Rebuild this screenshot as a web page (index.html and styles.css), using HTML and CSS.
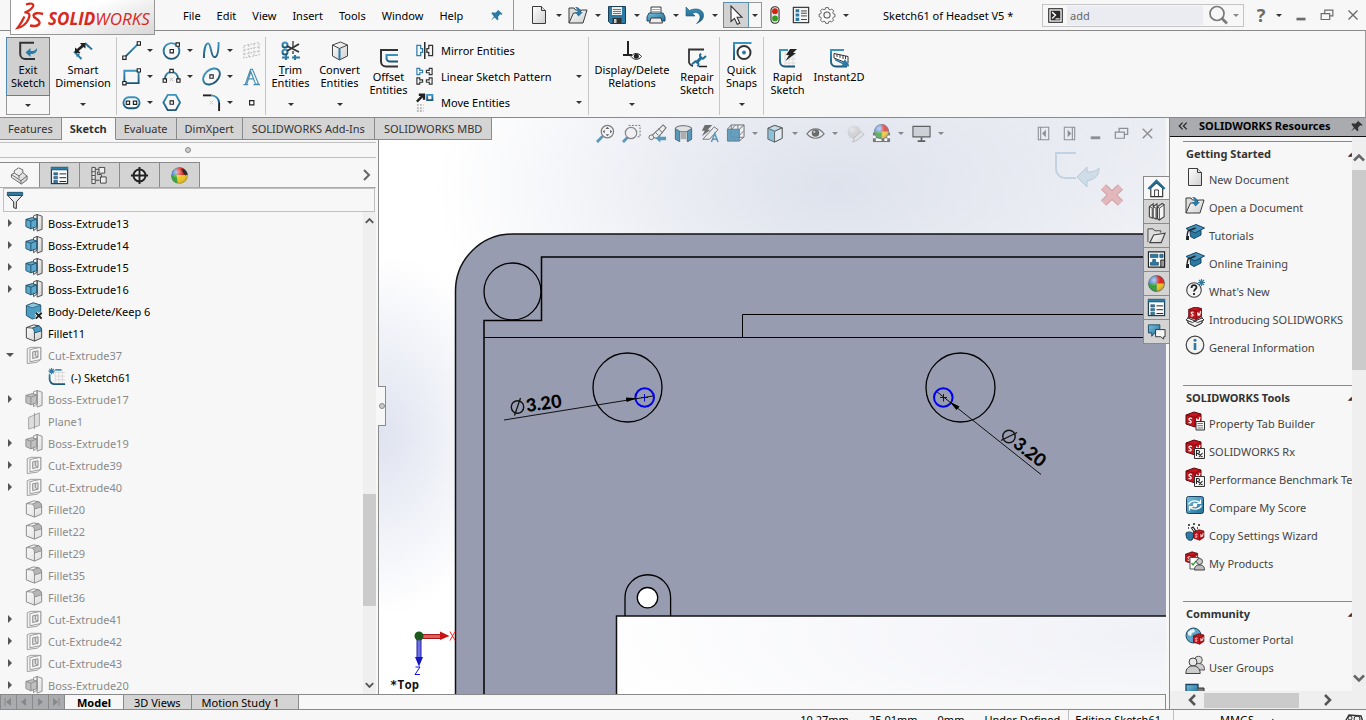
FILE: index.html
```html
<!DOCTYPE html>
<html lang="en">
<head>
<meta charset="utf-8">
<title>SOLIDWORKS - Sketch61 of Headset V5</title>
<link rel="stylesheet" href="styles.css">
</head>
<body>
<svg class="defs" aria-hidden="true">
  <defs>
    <linearGradient id="gBlue" x1="0" y1="0" x2="1" y2="1"><stop offset="0" stop-color="#7cc0de"/><stop offset="1" stop-color="#1f6c96"/></linearGradient>
    <linearGradient id="gPaper" x1="0" y1="0" x2="1" y2="1"><stop offset="0" stop-color="#fff"/><stop offset="1" stop-color="#cfcfcf"/></linearGradient>
    <linearGradient id="gStroke" x1="0" y1="0" x2="0" y2="1"><stop offset="0" stop-color="#3b95c0"/><stop offset="1" stop-color="#1c5677"/></linearGradient>
    <radialGradient id="gShine" cx=".35" cy=".3" r=".8"><stop offset="0" stop-color="#fff" stop-opacity=".65"/><stop offset=".5" stop-color="#fff" stop-opacity="0"/><stop offset="1" stop-color="#000" stop-opacity=".3"/></radialGradient>
    <symbol id="new" viewBox="0 0 20 20"><path d="M3.500 1.500h9l4 4v13h-13z" fill="url(#gPaper)" stroke="#3b3b3b"/><path d="M12.500 1.500v4h4" fill="#ddd" stroke="#3b3b3b"/></symbol>
    <symbol id="open" viewBox="0 0 20 20"><path d="M1 18V3h5l1.500 2H13v3" fill="#ddd" stroke="#3b3b3b"/><path d="M1 18 5.500 8h6l2-3h5.500l-4 13z" fill="url(#gPaper)" stroke="#3b3b3b"/><path d="M7 2c4 0 5.500 2 5.500 5H15l-4.500 4.500L7 7h2.500C9.500 5 9 3.500 7 2z" fill="#2b7ba5"/></symbol>
    <symbol id="save" viewBox="0 0 20 20"><path d="M1.500 1.500h17v17h-15l-2-2z" fill="#2b7ba5" stroke="#1d3f55"/><path d="M5 2h10v8H5z" fill="#eee"/><path d="M6 4.500h8M6 6.500h8M6 8.500h8" stroke="#777"/><path d="M5.500 13h9v5.500h-9z" fill="#333"/><path d="M7 14h2.500v4H7z" fill="#ccc"/></symbol>
    <symbol id="print" viewBox="0 0 20 20"><path d="M5 8V2h10v6" fill="#fff" stroke="#3b3b3b"/><path d="M3 8h14l2 4v4H1v-4z" fill="url(#gBlue)" stroke="#1c4c68"/><path d="M5 13h10l1.500 5h-13z" fill="#eee" stroke="#3b3b3b"/><path d="M6 4.500h8M6 6.500h8" stroke="#aaa"/></symbol>
    <symbol id="undo" viewBox="0 0 20 20"><path d="M1 2v9h9L7.500 8.200c4-2 8 .5 7.500 4.500-.2 2-1.500 4-3.500 5.800 5-2 7.500-5 7-9C18 4 10 2.500 4.500 5.500z" fill="url(#gStroke)" stroke="#1c5677" stroke-width=".6"/></symbol>
    <symbol id="cursor" viewBox="0 0 20 20"><path d="M5 1v15.500l3.500-3.200 2.800 6 2.500-1.100-2.700-5.900h4.900z" fill="#fff" stroke="#333" stroke-width="1.100"/></symbol>
    <symbol id="traffic" viewBox="0 0 20 20"><rect x="5.500" y=".8" width="9" height="18.400" rx="4" fill="#e8e8e8" stroke="#333" stroke-width="1.200"/><circle cx="10" cy="5.800" r="3.200" fill="#d8210c"/><circle cx="10" cy="13.800" r="3.200" fill="#329a1e"/></symbol>
    <symbol id="options" viewBox="0 0 20 20"><rect x="1.500" y="1.500" width="17" height="17" fill="#f4f4f4" stroke="#333" stroke-width="1.300"/><path d="M4 3.500h4v3.500H4zM4 8.300h4v3.500H4zM4 13.100h4v3.500H4z" fill="#2b7ba5"/><path d="M10 5.500h6.500M10 8h6.500M10 11h6.500M10 15h6.500" stroke="#333"/></symbol>
    <symbol id="props" viewBox="0 0 20 20"><rect x="1.500" y="1.500" width="17" height="17" fill="#fafafa" stroke="#1d3f55" stroke-width="1.300"/><path d="M1 1.500h18v3H1z" fill="url(#gStroke)"/><path d="M4 7h4v2.500H4zM4 11h4v2.500H4zM4 15h4v2.500H4z" fill="#2b7ba5" stroke="#1d3f55" stroke-width=".5"/><path d="M10 8.300h7M10 12.300h7M10 16.300h7" stroke="#222"/></symbol>
    <symbol id="gear" viewBox="0 0 20 20"><path d="M8.300 2h3.400l.5 2.100 1.700.7 1.900-1.100 2.400 2.400-1.100 1.900.6 1.600 2.100.5v3.200l-2.100.6-.7 1.600 1.100 1.900-2.400 2.400-1.900-1.100-1.700.7-.5 2H8.400l-.6-2-1.600-.7-1.900 1.100-2.400-2.400L3 15.400l-.7-1.600-2-.5V10l2-.5L3 7.900 1.900 6l2.400-2.400 1.900 1.100 1.600-.6z" fill="#fafafa" stroke="#555" stroke-width="1.100" transform="translate(1 0) scale(.9)"/><circle cx="10" cy="10" r="3.400" fill="#f7f7f7" stroke="#555" stroke-width="1.200"/></symbol>
    <symbol id="pin" viewBox="0 0 20 20"><path d="M11 2l7 6.500-1.500 1-2-.5-3 3.500.5 4-1.500 1-4-4-5 4.500 4-6L2 7.500 3.500 6l4 .8L11 4z" fill="currentColor"/></symbol>
    <symbol id="term" viewBox="0 0 20 20"><rect x="1" y="1" width="18" height="18" fill="#fff" stroke="#222" stroke-width="1.500"/><path d="M3.500 3.500h13v13h-13z" fill="#2b2b2b"/><path d="M5.500 5.500 10 9.500l-4.500 4.500" fill="none" stroke="#fff" stroke-width="1.800"/><path d="M10 14.500h5.500" stroke="#fff" stroke-width="1.500"/></symbol>
    <symbol id="lens" viewBox="0 0 20 20"><circle cx="9" cy="8.500" r="7" fill="none" stroke="#7a7a7a" stroke-width="1.700"/><path d="m14 13.500 5 5" stroke="#7a7a7a" stroke-width="2.600"/></symbol>
    <symbol id="min" viewBox="0 0 20 20"><path d="M5 13h10v3H5z" fill="currentColor"/></symbol>
    <symbol id="restore" viewBox="0 0 20 20"><path d="M7.500 8V4.500h9v6.500H13M3.500 8.500H13v6.500H3.500z" fill="none" stroke="currentColor" stroke-width="1.300"/></symbol>
    <symbol id="close" viewBox="0 0 20 20"><path d="m5 5 10 10M15 5 5 15" stroke="currentColor" stroke-width="1.500"/></symbol>
    <symbol id="exit" viewBox="0 0 20 20"><path d="M16 1.800H2.200V13a5 5 0 0 0 5 5H17" fill="none" stroke="#333" stroke-width="2"/><path d="M19 7c.5 4-2 6-6.500 6v3L7.500 11.500l5-4.500v3c3 .3 5-.5 6.500-3z" fill="#2b7ba5"/></symbol>
    <symbol id="dim" viewBox="0 0 20 20"><path d="M1 10.500 8.500 18M12 2l7 6.500" stroke="#2b7ba5" stroke-width="2"/><path d="m3.500 15.500 3-3M14.500 6l1.500-1.500" stroke="#2b7ba5" stroke-width="1.500"/><path d="M2 12V6.500l2 1.600L8.500 4 7 2h5.500v5.500l-2-1.600L5.700 10 7.500 12z" fill="#222"/></symbol>
    <symbol id="line" viewBox="0 0 20 20"><path d="m3 17 14-14" stroke="url(#gStroke)" stroke-width="2"/><path d="M.8 15.800h3.500v3.500H.8zM16 .8h3.500v3.500H16z" class="pt"/></symbol>
    <symbol id="circle" viewBox="0 0 20 20"><circle cx="10" cy="10.500" r="8.300" class="sk"/><path d="M8.500 9h3.500v3.500H8.500zM14.800 2h3.500v3.500h-3.500z" class="pt"/></symbol>
    <symbol id="spline" viewBox="0 0 20 20"><path d="M2 18C2 10 3.500 2.500 6.500 2.500S9.500 17 13 17 17.500 8 17.500 1" class="sk"/></symbol>
    <symbol id="plane" viewBox="0 0 20 20"><path d="M2 5 18 1.500v13L2 18zM7.300 4v13M12.600 3v13M2 9.500l16-3.500M2 14l16-3.500" fill="none" stroke="#bbb" stroke-width="1.100" stroke-dasharray="2 1.500"/></symbol>
    <symbol id="rect" viewBox="0 0 20 20"><path d="M2.500 4h15v13h-15z" class="sk"/><path d="M.8 15.300h3.500v3.500H.8zM16 1.800h3.500v3.500H16z" class="pt"/></symbol>
    <symbol id="arc" viewBox="0 0 20 20"><path d="M3 13a7 8 0 0 1 14 0" class="sk"/><path d="M8.300 2.500h3.500V6H8.300zM1.200 12.500h3.500V16H1.200zM15.500 12.500H19V16h-3.500z" class="pt"/><path d="m8 11 4 4m0-4-4 4" stroke="#bbb"/></symbol>
    <symbol id="ellipse" viewBox="0 0 20 20"><ellipse cx="10" cy="10" rx="10" ry="7" transform="rotate(-42 10 10)" class="sk"/><path d="M8.300 8.300h3.500v3.500H8.300z" class="pt"/></symbol>
    <symbol id="text" viewBox="0 0 20 20"><path d="M1.500 18.500h5M12 18.500h7M3.500 18 9 2.500h2L17.500 18h-3.200L9.300 5 5 18zM6 12.500h6.800" fill="none" stroke="#4a8fb3" stroke-width="1.200"/></symbol>
    <symbol id="slot" viewBox="0 0 20 20"><rect x="1.500" y="4.500" width="17" height="11.500" rx="5.700" class="sk"/><path d="M4.500 8.500H8V12H4.500zM12 8.500h3.500V12H12z" class="pt"/></symbol>
    <symbol id="poly" viewBox="0 0 20 20"><path d="M6 2h8.500l4.500 8-4.500 8H6l-4.500-8z" class="sk"/><path d="M8.500 8.300H12v3.500H8.500z" class="pt"/></symbol>
    <symbol id="fillet" viewBox="0 0 20 20"><path d="M1 2.500h9" stroke="#222" stroke-width="2"/><path d="M10 2.500a8 8 0 0 1 8 8" class="sk"/><path d="M18 10.500V19" stroke="#222" stroke-width="2"/><path d="m8 8 4 4m0-4-4 4" stroke="#ccc"/></symbol>
    <symbol id="point" viewBox="0 0 20 20"><path d="M8 8h4.500v4.500H8z" class="pt"/></symbol>
    <symbol id="trim" viewBox="0 0 20 20"><circle cx="4" cy="4" r="2.500" class="sk"/><circle cx="4" cy="11" r="2.500" class="sk"/><path d="m6 5 12 6M6 10l12-7" stroke="#333" stroke-width="1.800"/><path d="M12 0v6M12 10v3" stroke="#333" stroke-width="1.300"/><path d="M1 16.500h7M11 16.500h8M5 14v5M14 14v5" stroke="#2b7ba5" stroke-width="2.200"/></symbol>
    <symbol id="convert" viewBox="0 0 20 20"><path d="m2.500 4 8-3 7 3v11l-8 4-7-4z" fill="url(#gPaper)" stroke="#444"/><path d="m2.500 4 7 3.500 8-3.500" fill="none" stroke="#444"/><path d="M9.500 7.500V19" stroke="#2b7ba5" stroke-width="2"/></symbol>
    <symbol id="offset" viewBox="0 0 20 20"><path d="M19 2H2v11.500a5 5 0 0 0 5 5H19" fill="none" stroke="#333" stroke-width="2"/><path d="M19 7H7.500v3a3.500 3.500 0 0 0 3.500 3.500h8" class="sk"/></symbol>
    <symbol id="mirror" viewBox="0 0 20 20"><path d="M2 4.500h4V8h2v4H6v3.500H2z" fill="none" stroke="#2b7ba5" stroke-width="1.300"/><path d="M18.500 4.500h-4V8h-2v4h2v3.500h4z" fill="none" stroke="#333" stroke-width="1.300"/><path d="M10.300 1v18" stroke="#111" stroke-width="1.400"/></symbol>
    <symbol id="pattern" viewBox="0 0 20 20"><path d="M2 1.500h3v2h3V6H5v2H2z" fill="none" stroke="#2b7ba5" stroke-width="1.200"/><path d="M18 1.500h-3v2h-3V6h3v2h3zM2 11.500h3v2h3V16H5v2H2zM18 11.500h-3v2h-3V16h3v2h3z" fill="none" stroke="#333" stroke-width="1.200"/></symbol>
    <symbol id="move" viewBox="0 0 20 20"><path d="m2 9 7-7M4 1.800h5.500V7" fill="none" stroke="#222" stroke-width="2.500"/><path d="M12.800 2h5.500v5.500h-5.500z" class="sk"/><path d="M2 12.500h7M2 16h7M2 19h7" stroke="#bbb" stroke-width="2" stroke-dasharray="2 1.200"/></symbol>
    <symbol id="relations" viewBox="0 0 20 20"><path d="M6 0v13M1 14h9" stroke="#222" stroke-width="2"/><path d="M9 15.500c3-4 7.500-4 10.500 0-3 3.800-7.500 3.800-10.500 0z" fill="#fff" stroke="#222"/><circle cx="14.300" cy="15.200" r="2.500" fill="#222"/></symbol>
    <symbol id="repair" viewBox="0 0 20 20"><path d="M17 1.500H2v11a5 5 0 0 0 4 5.500" fill="none" stroke="#333" stroke-width="1.800"/><path d="m9 15 6-6" stroke="#1f6c96" stroke-width="3"/><path d="M14 5.500c-2 2-1 5 2 5.200l3-2.700M10.500 18.500c2-2 1-5-2-5.200l-3.500 3" fill="none" stroke="#1f6c96" stroke-width="2"/><path d="M12 18.500h8" stroke="#222" stroke-width="1.500"/></symbol>
    <symbol id="snaps" viewBox="0 0 20 20"><path d="M19.500 2H2v17" class="sk"/><circle cx="12" cy="11.500" r="6.500" fill="#fff" stroke="#333" stroke-width="2"/><circle cx="12" cy="11.500" r="2" fill="#2b7ba5"/></symbol>
    <symbol id="rapid" viewBox="0 0 20 20"><path d="M7 7h11M7 11h11M7 15h11M7 4v15M11 4v15M15 4v15" stroke="#ddd"/><path d="M10 2H2v11.500a5 5 0 0 0 5 5h10" class="sk"/><path d="M12 1h7l-4 4h3L7.500 13 11 7H8z" fill="#222"/></symbol>
    <symbol id="instant" viewBox="0 0 20 20"><path d="M15 2H2v11.500a5 5 0 0 0 5 5h11" class="sk"/><path d="m5 5.500 14 3v7L5 10z" fill="#fff" stroke="#333"/><path d="M8 6v3M11 6.800v3M14 7.500v3.500M16.500 8v3" stroke="#333"/><path d="m6 11.500 9 4.500M16 12.500l3.500 5-6 .5z" fill="#2b7ba5" stroke="#2b7ba5" stroke-width="1.500"/></symbol>
    <symbol id="part" viewBox="0 0 20 20"><path d="m1.500 9 3-1.500V5L9 2l4.500 2v3l4.500 3.500v4L12 19 1.500 12z" fill="url(#gPaper)" stroke="#666"/><path d="m4.500 7.500 5 3 4-3.500M1.500 9l10 6.500 6.500-5M11.500 15.500V19M9.500 10.500V13" fill="none" stroke="#666"/></symbol>
    <symbol id="config" viewBox="0 0 20 20"><path d="M2 1.500h3.500v17H2zM5.500 3.500H10M5.500 15H10M2 6h3M2 10h3M2 14h3" fill="#eee" stroke="#444"/><path d="M9.500 1.500h6v6h-6zM11 11.500h6v6.500h-6zM8 6v3h4v3" fill="#eee" stroke="#444"/></symbol>
    <symbol id="target" viewBox="0 0 20 20"><circle cx="10" cy="10" r="6.300" fill="#e8e8e8" stroke="#222" stroke-width="2"/><path d="M10 1v18M1 10h18" stroke="#222" stroke-width="2"/></symbol>
    <symbol id="ball" viewBox="0 0 20 20"><circle cx="10" cy="10" r="8.500" fill="#3a78d0"/><path d="M10 1.500a8.500 8.500 0 0 1 8.500 8.500H10z" fill="#d8241d"/><path d="M18.500 10a8.500 8.500 0 0 1-8.500 8.500V10z" fill="#f0c21b"/><path d="M10 18.500A8.500 8.500 0 0 1 1.500 10H10z" fill="#2f9e35"/><circle cx="10" cy="10" r="8.500" fill="url(#gShine)" stroke="#555" stroke-width=".5"/></symbol>
    <symbol id="ball2" viewBox="0 0 20 20"><circle cx="10" cy="10" r="8.700" fill="#3aa83a"/><path d="M2 7a8.700 8.700 0 0 1 14-3l2.700 6H4z" fill="#d8241d"/><path d="M1.300 10 7 7l1 11.500A8.700 8.700 0 0 1 1.300 10z" fill="#38a038"/><path d="M7 9.500h11.700A8.700 8.700 0 0 1 8 18.500z" fill="#eec422"/><path d="M2.500 5.500 7 1.800 7 8l-5.500 2z" fill="#3a78d0"/><path d="m11 3 5 7 2.500-1c0-3-3-6-7.500-6z" fill="#222"/><circle cx="10" cy="10" r="8.700" fill="url(#gShine)"/></symbol>
    <symbol id="funnel" viewBox="0 0 20 20"><path d="m2 5 6.500 7v6.500l3 1V12L18 5z" fill="url(#gPaper)" stroke="#333" stroke-width="1.100"/><path d="M1.500 1.500h17V5h-17z" fill="#2b7ba5" stroke="#1c4c68"/></symbol>
    <symbol id="boss" viewBox="0 0 20 20"><path d="m9.500 2 4-1.500v15l-4 3zM13.500.5l5.500 2V17l-5.500 2z" fill="url(#gPaper)" stroke="#444"/><path d="M1 6 8 4l5 1.500v8.500l-6.500 2.500L1 14z" fill="#5ea9cb" stroke="#1c4c68"/><path d="M1 6 6.500 8v8.500M6.500 8 13 5.500" fill="none" stroke="#1c4c68"/></symbol>
    <symbol id="bodydel" viewBox="0 0 20 20"><path d="M1.500 4 9 1l8.500 2.500v12L8 19l-6.500-4z" fill="#4c9dc2" stroke="#1c4c68"/><path d="M1.500 4 8 6.500l9.500-3L9 1z" fill="#8fc7df" stroke="#1c4c68" stroke-width=".7"/><path d="m12 12 6.500 6.500m0-6.500L12 18.500" stroke="#fff" stroke-width="4"/><path d="m12 12 6.500 6.500m0-6.500L12 18.500" stroke="#222" stroke-width="2.200"/></symbol>
    <symbol id="fil" viewBox="0 0 20 20"><path d="m1.500 4 8-3 6 1c2 1 3 3 3 5v8.500L10.500 19l-9-3.500z" fill="url(#gPaper)" stroke="#444" stroke-width="1.100"/><path d="M8 4.500 15 2c2 1 3.500 3 3.500 5.500L10.500 10c0-3-.5-4-2.500-5.500z" fill="#4c9dc2" stroke="#1c4c68"/><path d="m1.500 4 6.500.5M10.500 10v9" stroke="#444"/></symbol>
    <symbol id="cut" viewBox="0 0 20 20"><path d="m2.500 3 4-1.500h11V15l-4 3-11 1.500z" fill="#f2f2f2" stroke="#555"/><path d="m5.500 4 12-2.500V15l-12 2.500z" fill="#fafafa" stroke="#555"/><path d="m8.500 6.500 6-1.200v7.200l-6 1.500z" fill="#ccc" stroke="#444"/><path d="M11.500 6v4.500l3 2" fill="none" stroke="#444"/></symbol>
    <symbol id="refplane" viewBox="0 0 20 20"><path d="m4 6 12-5v14L4 19z" fill="#ccc" stroke="#666"/><path d="M10.500 1v18" stroke="#555"/></symbol>
    <symbol id="sketch" viewBox="0 0 20 20"><path d="M8 5h11M8 9h11M8 13h11M8 2v14M12 2v14M16 2v14" stroke="#d8d8d8"/><path d="M8 2h7M1.800 7v5.500a5.500 5.500 0 0 0 5.500 5.500H19" class="sk"/><path d="M4 0v7M.5 3.500h7M1.500 1l5 5M6.500 1l-5 5" stroke="#2b7ba5" stroke-width="1.200"/></symbol>
    <symbol id="zoomfit" viewBox="0 0 20 20"><path d="m1 19 6-6" stroke="#2b7ba5" stroke-width="3"/><circle cx="12" cy="8" r="6.500" fill="#f5f6f8" stroke="#555" stroke-width="1.300"/><path d="m12 3 2 2.200h-4zM12 13l2-2.200h-4zM7 8l2.200-2v4zM17 8l-2.200-2v4z" fill="#333"/></symbol>
    <symbol id="zoomarea" viewBox="0 0 20 20"><path d="M7 1.500h12v12h-4" fill="none" stroke="#444" stroke-dasharray="2 1.500"/><path d="m1 19 5-5" stroke="#2b7ba5" stroke-width="3"/><circle cx="9.500" cy="9.500" r="6" fill="#eef0f4" stroke="#666" stroke-width="1.300"/></symbol>
    <symbol id="prev" viewBox="0 0 20 20"><path d="M2 14 16 1l3 3-9 11z" fill="#eee" stroke="#444" stroke-width="1.100"/><path d="m11 5 4 4M8 9l3 3" stroke="#444"/><path d="M19 17h-6v2.500L8 15l5-4v2.500h6z" fill="#2b7ba5"/><circle cx="3.500" cy="14" r="2.500" fill="#eee" stroke="#444"/></symbol>
    <symbol id="section" viewBox="0 0 20 20"><path d="M1.500 4c4-3 12-3 17 0v12l-4 2.500V8h-9v10l-4-2z" fill="#ddd" stroke="#333"/><path d="M1.500 5 6 7.500v11l-4.500-2.500zM14 7.500 18.500 5v11L14 18.500z" fill="#2b7ba5" stroke="#1c4c68"/><path d="M7 8h6v8H7z" fill="#999"/></symbol>
    <symbol id="dynamic" viewBox="0 0 20 20"><path d="M5 1h8L8 6h3l-9 7 3-6H2z" fill="#444"/><path d="M3 16 15 3l4 3-9 10z" fill="#eee" stroke="#444"/><path d="m12 19 3.500-9 3.500 9M13 16h5" fill="none" stroke="#2b7ba5" stroke-width="1.500"/></symbol>
    <symbol id="view" viewBox="0 0 20 20"><path d="m1.500 5.500 4-4.500H19v12.500L14 18M14 5.500 19 1" fill="#eef0f4" stroke="#444"/><path d="M5.500 1v13H19M10 1 6 5.500M12.500 1v4.500M19 7l-5 5" fill="none" stroke="#555"/><path d="M1.500 5.500H14V18H1.500z" fill="#2b7ba5" opacity=".9" stroke="#1c4c68"/></symbol>
    <symbol id="display" viewBox="0 0 20 20"><path d="M2 4.500 9 1.500l8 2.500v11l-8 4-7-3z" fill="#6fb4d3" stroke="#333"/><path d="M9 7.500 17 4v11l-8 4z" fill="#e4edf2" stroke="#333"/><path d="m2 4.500 7 3L17 4 9 1.500z" fill="#b7d9e8" stroke="#333"/></symbol>
    <symbol id="eye" viewBox="0 0 20 20"><path d="M1 10.500c5-7 13-7 18 0-5 6-13 6-18 0z" fill="#eee" stroke="#555" stroke-width="1.300"/><circle cx="10" cy="9.500" r="4" fill="#444"/><circle cx="8.700" cy="8.200" r="1.200" fill="#ccc"/></symbol>
    <symbol id="editapp" viewBox="0 0 20 20"><circle cx="8.500" cy="8.500" r="7" fill="#bbb"/><circle cx="8.500" cy="8.500" r="7" fill="url(#gShine)"/><path d="m7 19 2-5 7-6 3 3-7 6z" fill="#ddd" stroke="#888"/></symbol>
    <symbol id="scene" viewBox="0 0 20 20"><path d="M1 9h18v10H1z" fill="#555"/><path d="M1 12h3v3H1zM7 15h3v3H7zM13 15h3v3h-3zM16 12h3v3h-3zM4 15h3v3H4z" fill="#fff"/><use href="#ball" x="1" y="-1" width="18" height="18"/></symbol>
    <symbol id="monitor" viewBox="0 0 20 20"><path d="M1 2.500h18v11H1z" fill="#c6c9ce" stroke="#333" stroke-width="1.200"/><path d="M10 14v3.500M6 18h8" stroke="#333" stroke-width="1.800"/></symbol>
    <symbol id="dockl" viewBox="0 0 20 20"><path d="M4.500 3.500h11v13h-11zM7 3.500v13" fill="none" stroke="currentColor" stroke-width="1.100"/><path d="M12.500 6v8l-4-4z" fill="currentColor"/></symbol>
    <symbol id="dockr" viewBox="0 0 20 20"><path d="M4.500 3.500h11v13h-11zM13 3.500v13" fill="none" stroke="currentColor" stroke-width="1.100"/><path d="M8 6v8l4-4z" fill="currentColor"/></symbol>
    <symbol id="home" viewBox="0 0 20 20"><path d="M4 9.500V18.500h12.500V9.500L10 4z" fill="#fff" stroke="#333" stroke-width="1.200"/><path d="M8 18.500v-7h4v7" fill="none" stroke="#333"/><path d="m1.500 10.500 8.500-8.500 8.500 8.500" fill="none" stroke="#1f6c96" stroke-width="2.500"/></symbol>
    <symbol id="library" viewBox="0 0 20 20"><path d="M2.500 5 6.500 2v14l-1 1-3-1.500zM6.500 5l4-3v15l-1 1-3-1.500zM11 5l5-3.500 2 1.500v12.500L13 19l-2-1.500z" fill="#f5f5f5" stroke="#444" stroke-width="1.200"/><path d="m3 5 2.500 1.500V17M6.500 5 9.500 6.500V18M11 5l2 1.500V19M13 6.500 18 3" fill="none" stroke="#444"/></symbol>
    <symbol id="folder" viewBox="0 0 20 20"><path d="M1 17V3h5.500l1.500 2h6.500v2" fill="#ddd" stroke="#444"/><path d="m3 17.500 4-8 12-2-4 10z" fill="url(#gPaper)" stroke="#444" stroke-width="1.200"/></symbol>
    <symbol id="palette" viewBox="0 0 20 20"><path d="M1.500 2h17v16h-17z" fill="#fff" stroke="#222" stroke-width="1.200"/><path d="M3.500 4.500h8V8h-8zM13.500 4.500H17V8h-3.500zM6 10h3v3h3v3H3.500v-3H6z" fill="#2b7ba5" stroke="#1c4c68" stroke-width=".7"/><path d="M14.500 10.500h4V18h-4z" fill="#999" stroke="#222"/></symbol>
    <symbol id="forum" viewBox="0 0 20 20"><path d="M1.500 3h12v8.500H8L5 15v-3.500H1.500z" fill="url(#gBlue)" stroke="#1c4c68"/><path d="M9 8h10v7.500h-1.500V18l-3-2.500H9z" fill="#f5f5f5" stroke="#333"/></symbol>
    <symbol id="cap" viewBox="0 0 20 20"><path d="m5 8 .5 5.500L9 15.500l7-3.500V7.500z" fill="#2b7ba5" stroke="#174561"/><path d="m1 5.500 10-4 8.500 3.500L10 10z" fill="#4593ba" stroke="#174561"/><path d="M10.500 5 3 8c-1 3-1 5-1 8" fill="none" stroke="#222" stroke-width="1.400"/><path d="M1.500 13h2.500v4H1z" fill="#222"/></symbol>
    <symbol id="whatsnew" viewBox="0 0 20 20"><circle cx="9" cy="11" r="7.300" fill="#f3f3f3" stroke="#444" stroke-width="1.100"/><path d="M6.500 9c0-4 5-3.500 5-.7 0 2-2.500 2-2.500 4.200M9 14v2" fill="none" stroke="#222" stroke-width="1.800"/><path d="M16.500 0v7M13 3.500h7M14 1l5 5M19 1l-5 5" stroke="#2b7ba5" stroke-width="1.200"/></symbol>
    <symbol id="swbox" viewBox="0 0 20 20"><path d="m2 4 8-3 7 2v9l-6 4-9-3z" fill="#c5161d" stroke="#560a0d"/><path d="m2 4 9 2.500L17 3M11 6.500V16" fill="none" stroke="#7c0d12"/><path d="M8 7.500c-3-1-4 1-2 2s1.500 3-1.500 2M12.500 7.500l.5 4 1-2.500 1 1.500 1-4.500" fill="none" stroke="#fff" stroke-width="1.200"/></symbol>
    <symbol id="intro" viewBox="0 0 20 20"><path d="m3 10 7-2 7 2v6l-7 3.500L3 16z" fill="#ddd" stroke="#333"/><use href="#swbox" x="2" y="-1" width="17" height="17"/><path d="m3 11.500 7 3 7-3V16l-7 3.500L3 16z" fill="#eee" stroke="#333"/><path d="m3 11-2 2 6.500 2.500L10 14zM17 11l2 2-6.500 2.500L10 14z" fill="#fafafa" stroke="#333"/></symbol>
    <symbol id="info" viewBox="0 0 20 20"><circle cx="10" cy="10" r="8.800" fill="#f4f4f4" stroke="#444" stroke-width="1.200"/><circle cx="10" cy="5.200" r="1.500" fill="#2b7ba5"/><path d="M10 8v7" stroke="#2b7ba5" stroke-width="2.600"/></symbol>
    <symbol id="builder" viewBox="0 0 20 20"><use href="#swbox" x="-1" y="0" width="20" height="20"/><path d="M11 10.500h8.500v8.500H11z" fill="#f5f5f5" stroke="#333"/><path d="M12.500 12.500h5.500M12.500 14.700h5.500M12.500 17h5.500" stroke="#777"/></symbol>
    <symbol id="rx" viewBox="0 0 20 20"><use href="#swbox" x="-1" y="0" width="20" height="20"/><path d="M9.500 9.500h10v10h-10z" fill="#f5f5f5" stroke="#333"/><path d="M11.500 17v-5.500H13c2 0 2 3 0 3h-1.500m1.500 0 4.500 3.500m0-4L14 18" fill="none" stroke="#222" stroke-width="1.100"/></symbol>
    <symbol id="score" viewBox="0 0 20 20"><rect x="1.500" y="1.500" width="17" height="17" rx="2" fill="url(#gBlue)" stroke="#174561"/><path d="M3.500 9.500c2-4 8-5 12-1.500M16.500 10.500c-2 4-8 5-12 1.500M15.500 4.500v3.800h-3.500M4.500 15.500v-3.800H8" fill="none" stroke="#fff" stroke-width="1.300"/><circle cx="10" cy="10" r="2.200" fill="#fff"/></symbol>
    <symbol id="wizard" viewBox="0 0 20 20"><path d="M1 10c3-2 7-1 8 2l-2 5c-4 1-6-1-6-7z" fill="#2b7ba5" stroke="#174561"/><path d="M3 2h2M8 1h2M13 2h2M3 5h1M12 5h1" stroke="#222" stroke-width="1.500"/><path d="m7 4 6 9" stroke="#222" stroke-width="3"/><path d="m7.500 5 5 7.500" stroke="#fff"/><use href="#swbox" x="7" y="6" width="14" height="14"/></symbol>
    <symbol id="products" viewBox="0 0 20 20"><use href="#swbox" x="-1" y="0" width="16" height="16"/><path d="M5 6.500h9V18H5z" fill="#fff" stroke="#555"/><path d="m6.500 12 1.500 2 3-4" fill="none" stroke="#2f9e35" stroke-width="1.300"/><circle cx="14.500" cy="10.500" r="3" fill="#ccc" stroke="#444"/><path d="M9.500 19c0-4 2-5 5-5s5 1 5 5z" fill="#bbb" stroke="#444"/></symbol>
    <symbol id="portal" viewBox="0 0 20 20"><circle cx="8.500" cy="8.500" r="7.500" fill="#5ea9cb" stroke="#174561"/><path d="M3 5c2-2 4-3 6-3l1 3-3 1-1 3-3-1zM9 9l3-1 2 1-3 5z" fill="#e8f2f7"/><use href="#swbox" x="7" y="6" width="14" height="14"/></symbol>
    <symbol id="users" viewBox="0 0 20 20"><circle cx="13.500" cy="5" r="3.800" fill="#ddd" stroke="#555"/><path d="M8 15c0-5 2-6.500 5.500-6.500S19.500 10 19.500 15z" fill="#ccc" stroke="#555"/><circle cx="8" cy="7" r="4" fill="#e8e8e8" stroke="#444"/><path d="M.8 18.500C1 13 4 11 8 11s7 2 7.200 7.500z" fill="#ccc" stroke="#444"/></symbol>
    <symbol id="monitor2" viewBox="0 0 20 20"><path d="M1 1.500h12v9H1z" fill="url(#gBlue)" stroke="#174561" stroke-width="1.300"/><path d="M13 5h6v10h-9" fill="#777" stroke="#333"/></symbol>
  </defs>
</svg>

<header class="titlebar">
  <div class="logo">
    <svg class="logo-mark" viewBox="0 0 28 30" aria-hidden="true"><path d="M10 2.500C15 .5 18.500 2 17 4.500S12 9.500 8.500 10.500c5 0 6 2 4 6.500S6 25.500 1.500 26c3-3.500 5-8 7-11.500" fill="none" stroke="#d9281c" stroke-width="2.200"/><path d="M27 12c-5-1.500-9-1-9.500 1.500 0 3 6.500 4 6 7.500-.5 3-5 3.500-9.500 2.500" fill="none" stroke="#d9281c" stroke-width="2.400"/></svg>
    <span><b>SOLID</b>WORKS</span>
  </div>
  <nav class="menu">
    <a href="#">File</a><a href="#">Edit</a><a href="#">View</a><a href="#">Insert</a><a href="#">Tools</a><a href="#">Window</a><a href="#">Help</a>
    <button class="menu-pin" aria-label="Pin menu"><svg><use href="#pin"/></svg></button>
  </nav>
  <div class="quick">
    <button class="q" aria-label="New"><svg><use href="#new"/></svg></button><button class="dd" aria-label="New options"></button>
    <button class="q" aria-label="Open"><svg><use href="#open"/></svg></button><button class="dd" aria-label="Open options"></button>
    <button class="q" aria-label="Save"><svg><use href="#save"/></svg></button><button class="dd" aria-label="Save options"></button>
    <button class="q" aria-label="Print"><svg><use href="#print"/></svg></button><button class="dd" aria-label="Print options"></button>
    <button class="q" aria-label="Undo"><svg><use href="#undo"/></svg></button><button class="dd" aria-label="Undo options"></button>
    <button class="q picked" aria-label="Select"><svg><use href="#cursor"/></svg></button><button class="dd boxed" aria-label="Select options"></button>
    <button class="q wide" aria-label="Rebuild"><svg><use href="#traffic"/></svg></button>
    <button class="q wide" aria-label="File properties"><svg><use href="#options"/></svg></button>
    <button class="q wide" aria-label="Options"><svg><use href="#gear"/></svg></button><button class="dd slim" aria-label="Options menu"></button>
  </div>
  <div class="doc-title">Sketch61 of Headset V5 *</div>
  <div class="search">
    <svg class="term"><use href="#term"/></svg>
    <input type="text" value="add" aria-label="Search commands">
    <button class="q" aria-label="Search"><svg><use href="#lens"/></svg></button><button class="dd slim grey" aria-label="Search options"></button>
  </div>
  <div class="window-btns">
    <button class="help" aria-label="Help">?</button><button class="dd slim" aria-label="Help options"></button>
    <button class="w" aria-label="Minimize"><svg><use href="#min"/></svg></button>
    <button class="w" aria-label="Restore"><svg><use href="#restore"/></svg></button>
    <button class="w" aria-label="Close"><svg><use href="#close"/></svg></button>
  </div>
</header>

<section class="ribbon">
  <div class="exit-group">
    <button class="tool exit"><svg><use href="#exit"/></svg><span>Exit<br>Sketch</span></button>
    <button class="dd exit-dd" aria-label="Exit options"></button>
  </div>
  <div class="tool-col dimension"><button class="tool"><svg><use href="#dim"/></svg><span>Smart<br>Dimension</span></button><button class="dd" aria-label="Dimension options"></button></div>
  <div class="sketch-grid">
    <button aria-label="Line"><svg><use href="#line"/></svg></button><button class="dd" aria-label="Line options"></button>
    <button aria-label="Circle"><svg><use href="#circle"/></svg></button><button class="dd" aria-label="Circle options"></button>
    <button aria-label="Spline"><svg><use href="#spline"/></svg></button><button class="dd" aria-label="Spline options"></button>
    <button aria-label="Plane"><svg><use href="#plane"/></svg></button>
    <button aria-label="Rectangle"><svg><use href="#rect"/></svg></button><button class="dd" aria-label="Rectangle options"></button>
    <button aria-label="Arc"><svg><use href="#arc"/></svg></button><button class="dd" aria-label="Arc options"></button>
    <button aria-label="Ellipse"><svg><use href="#ellipse"/></svg></button><button class="dd" aria-label="Ellipse options"></button>
    <button aria-label="Text"><svg><use href="#text"/></svg></button>
    <button aria-label="Slot"><svg><use href="#slot"/></svg></button><button class="dd" aria-label="Slot options"></button>
    <button aria-label="Polygon"><svg><use href="#poly"/></svg></button><span></span>
    <button aria-label="Fillet"><svg><use href="#fillet"/></svg></button><button class="dd" aria-label="Fillet options"></button>
    <button aria-label="Point"><svg><use href="#point"/></svg></button>
  </div>
  <div class="tool-col entities"><button class="tool"><svg><use href="#trim"/></svg><span><u>T</u>rim<br>Entities</span></button><button class="dd" aria-label="Trim options"></button></div>
  <div class="tool-col entities"><button class="tool"><svg><use href="#convert"/></svg><span>Convert<br>Entities</span></button><button class="dd" aria-label="Convert options"></button></div>
  <div class="tool-col low entities"><button class="tool"><svg><use href="#offset"/></svg><span>Offset<br>Entities</span></button></div>
  <div class="rows">
    <div><button><svg><use href="#mirror"/></svg>Mirror Entities</button></div>
    <div><button><svg><use href="#pattern"/></svg>Linear Sketch Pattern</button><button class="dd" aria-label="Pattern options"></button></div>
    <div><button><svg><use href="#move"/></svg>Move Entities</button><button class="dd" aria-label="Move options"></button></div>
  </div>
  <div class="tool-col relations"><button class="tool"><svg><use href="#relations"/></svg><span>Display/Delete<br>Relations</span></button><button class="dd" aria-label="Relations options"></button></div>
  <div class="tool-col low repair"><button class="tool"><svg><use href="#repair"/></svg><span>Repair<br>Sketch</span></button></div>
  <div class="tool-col snaps"><button class="tool"><svg><use href="#snaps"/></svg><span>Quick<br>Snaps</span></button><button class="dd" aria-label="Snap options"></button></div>
  <div class="tool-col low rapid"><button class="tool"><svg><use href="#rapid"/></svg><span>Rapid<br>Sketch</span></button></div>
  <div class="tool-col low instant"><button class="tool"><svg><use href="#instant"/></svg><span>Instant2D</span></button></div>
</section>

<main class="work">
  <aside class="left">
    <nav class="cmd-tabs">
      <button>Features</button><button class="on">Sketch</button><button>Evaluate</button><button>DimXpert</button><button>SOLIDWORKS Add-Ins</button><button>SOLIDWORKS MBD</button>
    </nav>
    <div class="grip"><i class="dot"></i></div>
    <div class="fm-tabs">
      <button class="on" aria-label="Feature tree"><svg><use href="#part"/></svg></button>
      <button aria-label="Property manager"><svg><use href="#props"/></svg></button>
      <button aria-label="Configurations"><svg><use href="#config"/></svg></button>
      <button aria-label="DimXpert manager"><svg><use href="#target"/></svg></button>
      <button aria-label="Display manager"><svg><use href="#ball2"/></svg></button>
      <button class="more" aria-label="More"><svg viewBox="0 0 10 12"><path d="m2 1 5 5-5 5" fill="none" stroke="#666" stroke-width="2"/></svg></button>
    </div>
    <label class="filter"><svg><use href="#funnel"/></svg><input type="text" aria-label="Filter tree"></label>
    <div class="tree-wrap">
      <ul class="tree">
        <li><button class="tw" aria-label="Expand"></button><svg><use href="#boss"/></svg>Boss-Extrude13</li>
        <li><button class="tw" aria-label="Expand"></button><svg><use href="#boss"/></svg>Boss-Extrude14</li>
        <li><button class="tw" aria-label="Expand"></button><svg><use href="#boss"/></svg>Boss-Extrude15</li>
        <li><button class="tw" aria-label="Expand"></button><svg><use href="#boss"/></svg>Boss-Extrude16</li>
        <li><svg><use href="#bodydel"/></svg>Body-Delete/Keep 6</li>
        <li><svg><use href="#fil"/></svg>Fillet11</li>
        <li class="off"><button class="tw open" aria-label="Collapse"></button><svg><use href="#cut"/></svg>Cut-Extrude37</li>
        <li class="child"><svg><use href="#sketch"/></svg>(-) Sketch61</li>
        <li class="off"><button class="tw" aria-label="Expand"></button><svg><use href="#boss"/></svg>Boss-Extrude17</li>
        <li class="off"><svg><use href="#refplane"/></svg>Plane1</li>
        <li class="off"><button class="tw" aria-label="Expand"></button><svg><use href="#boss"/></svg>Boss-Extrude19</li>
        <li class="off"><button class="tw" aria-label="Expand"></button><svg><use href="#cut"/></svg>Cut-Extrude39</li>
        <li class="off"><button class="tw" aria-label="Expand"></button><svg><use href="#cut"/></svg>Cut-Extrude40</li>
        <li class="off"><svg><use href="#fil"/></svg>Fillet20</li>
        <li class="off"><svg><use href="#fil"/></svg>Fillet22</li>
        <li class="off"><svg><use href="#fil"/></svg>Fillet29</li>
        <li class="off"><svg><use href="#fil"/></svg>Fillet35</li>
        <li class="off"><svg><use href="#fil"/></svg>Fillet36</li>
        <li class="off"><button class="tw" aria-label="Expand"></button><svg><use href="#cut"/></svg>Cut-Extrude41</li>
        <li class="off"><button class="tw" aria-label="Expand"></button><svg><use href="#cut"/></svg>Cut-Extrude42</li>
        <li class="off"><button class="tw" aria-label="Expand"></button><svg><use href="#cut"/></svg>Cut-Extrude43</li>
        <li class="off"><button class="tw" aria-label="Expand"></button><svg><use href="#boss"/></svg>Boss-Extrude20</li>
      </ul>
      <div class="vscroll">
        <svg class="chev" viewBox="0 0 14 14"><path d="m3 9 4-4 4 4" fill="none" stroke="#555" stroke-width="2"/></svg>
        <div class="track"><i></i></div>
        <svg class="chev" viewBox="0 0 14 14"><path d="m3 5 4 4 4-4" fill="none" stroke="#555" stroke-width="2"/></svg>
      </div>
    </div>
    <div class="splitter"><i class="dot"></i></div>
  </aside>

  <section class="viewport">
    <svg class="model" role="img" aria-label="Top view of the sketch">
      <g transform="translate(-379 -118)">
        <path d="M455.500 3000V291a57 57 0 0 1 57-57H4000V616H616.500V3000z" fill="#989cb0" stroke="#111" stroke-width="1.500"/>
        <g fill="none" stroke="#000" stroke-width="1.300">
          <path d="M484 3000V320.500H541.500V257H4000" stroke-width="1.500"/>
          <path d="M484 337.500H4000M742.500 337.500V314.500H4000" stroke-width="1"/>
          <circle cx="512.500" cy="291.500" r="28.500"/>
          <circle cx="627.500" cy="387.500" r="34.500"/>
          <circle cx="960.500" cy="387.500" r="34.500"/>
          <path d="M625 616V597.500a22.800 22.800 0 0 1 45.600 0V616"/>
          <circle cx="647.500" cy="597.700" r="10.200" fill="#fff"/>
        </g>
        <g fill="none" stroke="#0000f0" stroke-width="2">
          <circle cx="644.700" cy="397.500" r="9.300"/><circle cx="943.300" cy="397.500" r="9.300"/>
          <path d="M644.500 394v7.500M641 397.500h7M943.500 394v7.500M940 397.500h7" stroke-width="1"/>
        </g>
        <g stroke="#111" fill="none">
          <path d="m504 420 149-24M936 391l105 83.500"/>
          <path d="m626 399 .7 3 10-3.800-10.500-.7zM949.500 401.500l7 8.500 3-3.500z" fill="#000" stroke="none"/>
          <circle cx="517.500" cy="407" r="6.200" stroke-width="1.400"/><path d="m514.500 415.500 6-17.500" stroke-width="1.300"/>
          <circle cx="1009" cy="436.500" r="6.200" stroke-width="1.400"/><path d="m1001 440.500 16-8" stroke-width="1.300"/>
        </g>
        <text class="dim" transform="translate(527 412) rotate(-8)">3.20</text>
        <text class="dim" transform="translate(1012 446) rotate(38)">3.20</text>
        <g>
          <path d="M419 634.500h23v4h-23z" fill="#e06060" stroke="#a01818"/><path d="m440 631.500 9.500 4.500-9.500 4z" fill="#c81414"/>
          <path d="M417 636h4v22h-4z" fill="#7070e8" stroke="#2020a0"/><path d="M415 657h8l-4 9.500z" fill="#1414c0"/>
          <circle cx="419" cy="636" r="4.500" fill="#1c5a1c"/>
          <path d="m450 631.500 5 9m0-9-5 9" stroke="#f22" stroke-width="1"/>
          <path d="M415.500 667h4.500l-5 7.500h5" fill="none" stroke="#1010f0"/>
          <text class="view-name" x="390" y="689">*Top</text>
        </g>
        <g opacity=".75">
          <path d="M1076 153h-20v16a9 9 0 0 0 9 9h11" fill="none" stroke="#b4cade" stroke-width="2"/>
          <path d="M1099 168c0 8-4 11-12 13v6l-10-10 10-10v5c6 0 9-1 12-4z" fill="#c5d9e5" stroke="#a5bdcc"/>
        </g>
        <path d="m1103.500 187 17 16m0-16-17 16" stroke="#d0a0a8" stroke-width="7.500"/>
        <path d="m1103.500 187 17 16m0-16-17 16" stroke="#e2b8bc" stroke-width="5.500"/>
      </g>
    </svg>
    <div class="hud">
      <button aria-label="Zoom to fit"><svg><use href="#zoomfit"/></svg></button>
      <button aria-label="Zoom to area"><svg><use href="#zoomarea"/></svg></button>
      <button aria-label="Previous view"><svg><use href="#prev"/></svg></button>
      <button aria-label="Section view"><svg><use href="#section"/></svg></button>
      <button aria-label="Dynamic annotation"><svg><use href="#dynamic"/></svg></button>
      <button aria-label="View orientation"><svg><use href="#view"/></svg></button><button class="dd" aria-label="Orientation options"></button>
      <button aria-label="Display style"><svg><use href="#display"/></svg></button><button class="dd" aria-label="Display options"></button>
      <button aria-label="Hide or show"><svg><use href="#eye"/></svg></button><button class="dd" aria-label="Visibility options"></button>
      <button class="dim-btn" aria-label="Edit appearance"><svg><use href="#editapp"/></svg></button>
      <button aria-label="Apply scene"><svg><use href="#scene"/></svg></button><button class="dd" aria-label="Scene options"></button>
      <button aria-label="View settings"><svg><use href="#monitor"/></svg></button><button class="dd" aria-label="View options"></button>
    </div>
    <div class="doc-btns">
      <button aria-label="Dock left"><svg><use href="#dockl"/></svg></button>
      <button aria-label="Dock right"><svg><use href="#dockr"/></svg></button>
      <button aria-label="Minimize document"><svg><use href="#min"/></svg></button>
      <button aria-label="Restore document"><svg><use href="#restore"/></svg></button>
      <button aria-label="Close document"><svg><use href="#close"/></svg></button>
    </div>
  </section>

  <aside class="task">
    <nav class="task-tabs">
      <button class="on" aria-label="Resources"><svg><use href="#home"/></svg></button>
      <button aria-label="Design library"><svg><use href="#library"/></svg></button>
      <button aria-label="File explorer"><svg><use href="#folder"/></svg></button>
      <button aria-label="View palette"><svg><use href="#palette"/></svg></button>
      <button aria-label="Appearances"><svg><use href="#ball"/></svg></button>
      <button aria-label="Custom properties"><svg><use href="#props"/></svg></button>
      <button aria-label="Forum"><svg><use href="#forum"/></svg></button>
    </nav>
    <div class="task-head"><button aria-label="Collapse"><svg viewBox="0 0 12 10"><path d="M5.500 1 1.500 5l4 4M10.500 1l-4 4 4 4" fill="none" stroke="#222" stroke-width="1.400"/></svg></button><h2>SOLIDWORKS Resources</h2><button aria-label="Pin panel"><svg><use href="#pin"/></svg></button></div>
    <div class="task-body">
      <div class="task-list">
        <section><h3>Getting Started</h3>
          <a href="#"><svg><use href="#new"/></svg>New Document</a>
          <a href="#"><svg><use href="#open"/></svg>Open a Document</a>
          <a href="#"><svg><use href="#cap"/></svg>Tutorials</a>
          <a href="#"><svg><use href="#cap"/></svg>Online Training</a>
          <a href="#"><svg><use href="#whatsnew"/></svg>What's New</a>
          <a href="#"><svg><use href="#intro"/></svg>Introducing SOLIDWORKS</a>
          <a href="#"><svg><use href="#info"/></svg>General Information</a>
        </section>
        <section><h3>SOLIDWORKS Tools</h3>
          <a href="#"><svg><use href="#builder"/></svg>Property Tab Builder</a>
          <a href="#"><svg><use href="#rx"/></svg>SOLIDWORKS Rx</a>
          <a href="#"><svg><use href="#rx"/></svg>Performance Benchmark Test</a>
          <a href="#"><svg><use href="#score"/></svg>Compare My Score</a>
          <a href="#"><svg><use href="#wizard"/></svg>Copy Settings Wizard</a>
          <a href="#"><svg><use href="#products"/></svg>My Products</a>
        </section>
        <section><h3>Community</h3>
          <a href="#"><svg><use href="#portal"/></svg>Customer Portal</a>
          <a href="#"><svg><use href="#users"/></svg>User Groups</a>
          <a href="#" aria-label="Discussion forum"><svg><use href="#monitor2"/></svg></a>
        </section>
      </div>
      <div class="vscroll">
        <svg class="chev" viewBox="0 0 14 14"><path d="m2 10 5-5 5 5" fill="none" stroke="#666" stroke-width="2.500"/></svg>
        <div class="track"><i></i></div>
        <svg class="chev" viewBox="0 0 14 14"><path d="m2 4 5 5 5-5" fill="none" stroke="#666" stroke-width="2.500"/></svg>
      </div>
    </div>
    <div class="hscroll">
      <svg class="chev" viewBox="0 0 14 14"><path d="M10 2 5 7l5 5" fill="none" stroke="#555" stroke-width="2.500"/></svg>
      <div class="track"><i></i></div>
      <svg class="chev" viewBox="0 0 14 14"><path d="m4 2 5 5-5 5" fill="none" stroke="#555" stroke-width="2.500"/></svg>
    </div>
  </aside>
  <nav class="bottom-tabs">
    <div class="steps">
      <button aria-label="First tab"><svg viewBox="0 0 14 14"><path d="M10 3v8L5 7z" fill="#888"/><path d="M4 3v8" stroke="#888"/></svg></button>
      <button aria-label="Previous tab"><svg viewBox="0 0 14 14"><path d="M9 3v8L4 7z" fill="#888"/></svg></button>
      <button aria-label="Next tab"><svg viewBox="0 0 14 14"><path d="M5 3v8l5-4z" fill="#888"/></svg></button>
      <button aria-label="Last tab"><svg viewBox="0 0 14 14"><path d="M4 3v8l5-4z" fill="#888"/><path d="M10 3v8" stroke="#888"/></svg></button>
    </div>
    <button class="on">Model</button><button>3D Views</button><button>Motion Study 1</button>
  </nav>
</main>

<footer class="status">
  <span>10.27mm</span><span>25.01mm</span><span>0mm</span><span class="state">Under Defined</span><span class="sep">Editing Sketch61</span><span class="sep units">MMGS</span><span class="up">▴</span>
  <svg class="tag" viewBox="0 0 20 20"><path d="m2 8 3-5 12 1 2 6-6 8z" fill="#eee" stroke="#333" stroke-width="1.400"/><circle cx="6" cy="6" r="2" fill="none" stroke="#333"/><circle cx="13" cy="7" r="3" fill="none" stroke="#333"/></svg>
</footer>
</body>
</html>
```

FILE: styles.css
```css
* { box-sizing: border-box; }
html, body { height: 100%; }
body {
  margin: 0;
  display: flex;
  flex-direction: column;
  overflow: hidden;
  background: #f7f7f7;
  color: #000;
  font: 11px/13px "Noto Sans", "Open Sans", sans-serif;
}
button {
  padding: 0;
  border: 0;
  background: none;
  color: inherit;
  font: inherit;
}
a { color: inherit; text-decoration: none; }
svg { flex: none; width: 20px; height: 20px; overflow: visible; }
svg.defs { position: absolute; width: 0; height: 0; }
.sk { fill: none; stroke: url(#gStroke); stroke-width: 2; }
.pt { fill: #fff; stroke: #222; stroke-width: 1.2; }

/* small drop-down arrow */
.dd { display: flex; align-items: center; justify-content: center; color: #333; }
.dd::after {
  content: "";
  border: 3px solid transparent;
  border-top-color: currentColor;
  border-bottom: 0;
}
.dd.grey { color: #888; }

/* title bar */
.titlebar {
  position: relative;
  z-index: 5;
  flex: none;
  display: flex;
  align-items: stretch;
  height: 31px;
  border-bottom: 1px solid #8a8a8a;
}
.logo {
  position: absolute;
  left: 10px;
  top: 0;
  display: flex;
  align-items: center;
  gap: 4px;
  width: 145px;
  height: 35px;
  padding: 0 0 0 5px;
  border: 1px solid #999;
  border-top: 0;
  background: linear-gradient(160deg, #fff 40%, #d8d8d8);
  color: #d9281c;
  font: italic 17px/34px "Open Sans", sans-serif;
}
.logo-mark { width: 28px; height: 30px; }
.logo span { padding-top: 4px; }
.menu {
  display: flex;
  align-items: center;
  gap: 16px;
  width: 514px;
  padding-left: 183px;
  border-right: 1px solid #999;
  white-space: nowrap;
}
.menu svg { display: block; width: 14px; height: 14px; color: #2b7ba5; }
.menu-pin { margin-left: 11px; }
.quick { display: flex; align-items: center; padding-left: 14px; }
.quick .q, .search .q { display: flex; justify-content: center; width: 22px; }
.quick .dd { width: 17px; height: 25px; }
.quick .picked { width: 26px; height: 26px; align-items: center; border: 1px solid #5a8fb4; background: #d2d2d2; }
.quick .boxed { width: 13px; height: 26px; border: 1px solid #999; border-left: 0; }
.quick .wide { width: 26px; }
.quick .wide svg { width: 18px; height: 18px; }
.quick .slim { width: 12px; }
.doc-title { flex: 1; align-self: center; padding-left: 31px; white-space: nowrap; }
.search {
  align-self: center;
  display: flex;
  align-items: center;
  width: 202px;
  height: 23px;
  padding-left: 5px;
  border: 1px solid #c4c4c4;
}
.search .term { width: 15px; height: 15px; }
.search input {
  flex: 1;
  min-width: 0;
  height: 19px;
  margin: 0 4px;
  padding: 0 3px;
  border: 0;
  background: #eaecf1;
  color: #666;
  font: inherit;
}
.search .dd { width: 14px; }
.window-btns { display: flex; align-items: center; padding-left: 8px; color: #6b6b6b; }
.help { width: 18px; font-size: 18px; font-weight: 700; }
.window-btns .dd { width: 18px; }
.window-btns .w { display: flex; justify-content: center; width: 26px; }
.window-btns .w svg { width: 18px; height: 18px; }

/* ribbon */
.ribbon {
  flex: none;
  display: flex;
  height: 87px;
  padding: 6px 0 2px 6px;
  border-right: 1px solid #999;
  border-bottom: 1px solid #8a8a8a;
}
.tool { display: flex; flex-direction: column; align-items: center; width: 100%; text-align: center; white-space: nowrap; }
.tool svg { margin-bottom: 2px; }
.exit-group { width: 44px; }
.tool.exit { height: 59px; padding-top: 3px; border: 1px solid #4c88ad; background: #d0d0d0; }
.exit-dd { width: 44px; height: 19px; border: 1px solid #999; border-top: 0; }
.tool-col { display: flex; flex-direction: column; align-items: center; padding-top: 4px; }
.tool-col .dd { height: 14px; margin-top: 8px; }
.tool-col.low { padding-top: 11px; }
.dimension { width: 66px; }
.sketch-grid {
  display: grid;
  grid-template-columns: repeat(3, 20px 20px) 20px;
  grid-template-rows: repeat(3, 26px);
  align-items: center;
  padding: 0 4px;
  border-left: 1px solid #c6c6c6;
  border-right: 1px solid #c6c6c6;
}
.sketch-grid button { display: flex; justify-content: center; align-items: center; }
.sketch-grid svg { width: 19px; height: 19px; }
.sketch-grid .dd { padding-right: 2px; }
.entities { width: 49px; }
.rows { width: 176px; padding-left: 2px; border-right: 1px solid #c6c6c6; }
.rows div { display: flex; justify-content: space-between; height: 26px; }
.rows button:first-child { display: flex; align-items: center; gap: 7px; white-space: nowrap; }
.rows svg { width: 19px; height: 19px; }
.rows .dd { width: 18px; }
.relations { width: 86px; }
.repair { width: 45px; border-right: 1px solid #c6c6c6; }
.snaps { width: 44px; border-right: 1px solid #c6c6c6; }
.rapid { width: 47px; }
.instant { width: 56px; }

/* work area */
.work {
  flex: 1;
  min-height: 0;
  display: grid;
  grid-template-columns: 379px 1fr 200px;
  grid-template-rows: 1fr 15px;
  border-bottom: 1px solid #8a8a8a;
}
.left {
  position: relative;
  z-index: 3;
  min-height: 0;
  display: flex;
  flex-direction: column;
  border-right: 1px solid #8a8a8a;
}
.cmd-tabs { display: flex; flex: none; height: 22px; width: max-content; }
.cmd-tabs button {
  padding: 0 8px;
  border-right: 1px solid #8a8a8a;
  border-bottom: 1px solid #8a8a8a;
  background: #d4d4d4;
  color: #333;
  white-space: nowrap;
}
.cmd-tabs .on { border-bottom-color: #f7f7f7; background: #f7f7f7; font-weight: 700; }
.cmd-tabs button:nth-child(n+5) { padding: 0 9px; }
.grip {
  flex: none;
  display: flex;
  align-items: center;
  justify-content: center;
  height: 16px;
  margin: 2px 2px 0 0;
  border-top: 1px solid #c0c0c0;
  border-bottom: 1px solid #c0c0c0;
}
.dot { width: 6px; height: 6px; border: 1px solid #888; border-radius: 50%; background: #ccc; }
.fm-tabs { flex: none; display: flex; height: 26px; margin: 4px 2px 0 0; border-bottom: 1px solid #aaa; }
.fm-tabs button {
  display: flex;
  align-items: center;
  justify-content: center;
  width: 40px;
  border-top: 1px solid #8a8a8a;
  border-right: 1px solid #8a8a8a;
  background: #d4d4d4;
}
.fm-tabs svg { width: 19px; height: 19px; }
.fm-tabs .on { background: #f7f7f7; }
.fm-tabs .more { width: 18px; margin-left: auto; border: 0; background: none; }
.fm-tabs .more svg { width: 10px; height: 12px; }
.filter {
  flex: none;
  display: flex;
  align-items: center;
  height: 24px;
  margin: 0 3px;
  padding-left: 2px;
  border: 1px solid #c0c0c0;
}
.filter svg { width: 18px; height: 18px; }
.filter input { flex: 1; border: 0; background: none; font: inherit; }
.tree-wrap { flex: 1; min-height: 0; display: flex; padding-right: 2px; }
.tree { flex: 1; margin: 0; padding: 0; overflow: hidden; list-style: none; }
.tree li { display: flex; align-items: center; height: 22px; padding-left: 25px; }
.tree svg { width: 18px; height: 18px; margin-right: 5px; }
.tree .tw { width: 25px; height: 22px; margin-left: -25px; padding-left: 8px; }
.tw::before {
  content: "";
  display: block;
  width: 0;
  border: 4px solid transparent;
  border-left-color: #555;
  border-right: 0;
}
.tree .open { padding-left: 6px; }
.tw.open::before { border: 4px solid transparent; border-top-color: #555; border-bottom: 0; }
.tree .child { padding-left: 48px; }
.tree .off { color: #8a8a8a; }
.off svg { filter: grayscale(1); opacity: .6; }
.vscroll { flex: none; display: flex; flex-direction: column; align-items: center; width: 13px; background: #efefef; }
.vscroll .chev { width: 13px; height: 18px; }
.track { flex: 1; width: 100%; display: flex; }
.track i { background: #cbcbcb; }
.vscroll .track { flex-direction: column; }
.left .vscroll .track i { height: 25%; margin-top: 264px; }
.splitter {
  position: absolute;
  right: -8px;
  top: 268px;
  display: flex;
  align-items: center;
  justify-content: center;
  width: 8px;
  height: 40px;
  border: 1px solid #8a8a8a;
  border-left: 0;
  background: #f7f7f7;
}

/* graphics area */
.viewport {
  position: relative;
  min-width: 0;
  min-height: 0;
  overflow: hidden;
  background:
    radial-gradient(ellipse 400px 220px at 58% 12%, #dee2ec, #dee2ec00),
    radial-gradient(ellipse 130px 180px at 0 55%, #dfe3f0, #dfe3f000),
    radial-gradient(ellipse 600px 300px at 100% 0, #eceef4, #eceef400),
    radial-gradient(ellipse 600px 150px at 100% 90%, #f0f1f7, #f0f1f700),
    #fff;
}
.model { display: block; width: 100%; height: 100%; }
.dim { font: 900 18px Lato, sans-serif; }
.view-name { font: 700 12px "DejaVu Sans Mono", monospace; fill: #111; }
.hud { position: absolute; left: 213px; top: 5px; display: flex; opacity: .75; }
.hud button, .doc-btns button { display: flex; align-items: center; justify-content: center; width: 26px; height: 20px; }
.hud .dd { width: 14px; color: #666; }
.hud svg { width: 19px; height: 19px; }
.hud .dim-btn { opacity: .6; }
.doc-btns { position: absolute; right: 6px; top: 5px; display: flex; color: #8c8f94; }
.doc-btns svg { width: 19px; height: 19px; }

/* task pane */
.task {
  position: relative;
  z-index: 2;
  grid-row: 1 / 3;
  grid-column: 3;
  min-height: 0;
  min-width: 0;
  display: flex;
  flex-direction: column;
  margin-left: 3px;
  border-left: 1px solid #8a8a8a;
  background: #f7f7f7;
}
.task-tabs { position: absolute; left: -27px; top: 58px; width: 27px; border: 1px solid #8a8a8a; border-bottom: 0; }
.task-tabs button {
  display: flex;
  align-items: center;
  justify-content: center;
  width: 25px;
  height: 24px;
  border-bottom: 1px solid #8a8a8a;
  background: #d4d4d4;
}
.task-tabs .on { height: 23px; background: #f7f7f7; }
.task-tabs svg { width: 19px; height: 19px; }
.task-head {
  flex: none;
  display: flex;
  align-items: center;
  height: 19px;
  padding: 0 2px 3px 8px;
  border-bottom: 1px solid #111;
  background: #a9abaf;
  color: #333;
}
.task-head h2 { flex: 1; margin: 0 0 0 11px; color: #000; font-size: 11px; white-space: nowrap; }
.task-head svg { display: block; width: 10px; height: 10px; }
.task-head button:last-child svg { width: 14px; height: 14px; }
.task-body { flex: 1; min-height: 0; display: flex; }
.task-list { flex: 1; min-width: 0; padding: 4px 0 0 13px; overflow: hidden; color: #444; }
.task-list section { padding: 3px 0 24px; border-top: 1px solid #8a8a8a; }
.task-list h3 {
  display: flex;
  justify-content: space-between;
  margin: 0 0 2px;
  padding-left: 3px;
  color: #333;
  font-size: 11px;
  line-height: 18px;
}
.task-list h3::after { content: "◢"; font-size: 5px; }
.task-list a { display: flex; align-items: center; gap: 4px; height: 28px; padding-left: 2px; white-space: nowrap; }
.task-list svg { margin-bottom: 5px; }
.task-body .vscroll { width: 14px; }
.task-body .vscroll .chev { width: 14px; height: 33px; padding-top: 8px; }
.task-body .vscroll .track i { height: 41%; }
.hscroll { flex: none; display: flex; align-items: center; height: 18px; padding: 0 30px 0 14px; background: #efefef; }
.hscroll .chev { width: 16px; height: 14px; }
.hscroll .track { height: 15px; padding-left: 4px; }
.hscroll .track i { width: 82%; }

/* bottom tabs and status */
.bottom-tabs { grid-column: 1 / 3; display: flex; border: 1px solid #8a8a8a; border-bottom: 0; border-left: 0; background: #f7f7f7; }
.bottom-tabs > button { padding: 0 10px; border-right: 1px solid #8a8a8a; background: #d4d4d4; }
.bottom-tabs > .on { padding: 0 12px; background: #f7f7f7; font-weight: 700; }
.bottom-tabs > button:last-child { padding-right: 18px; }
.steps { display: flex; background: #a9abaf; border-right: 1px solid #8a8a8a; }
.steps button { width: 16px; border-left: 1px solid #8a8a8a; }
.steps svg { display: block; width: 14px; height: 14px; }
.status {
  flex: none;
  display: flex;
  justify-content: flex-end;
  height: 10px;
  padding-right: 2px;
  overflow: hidden;
  line-height: 19px;
  white-space: nowrap;
}
.status span { margin-right: 20px; }
.status .state { margin-right: 8px; }
.status .sep { margin: 0; padding: 0 6px; border-left: 1px solid #c0c0c0; }
.status .units { margin-left: 6px; padding: 0 16px 0 46px; }
.status .up { width: 74px; margin: 0; }
.status .tag { margin-top: 2px; }
```
